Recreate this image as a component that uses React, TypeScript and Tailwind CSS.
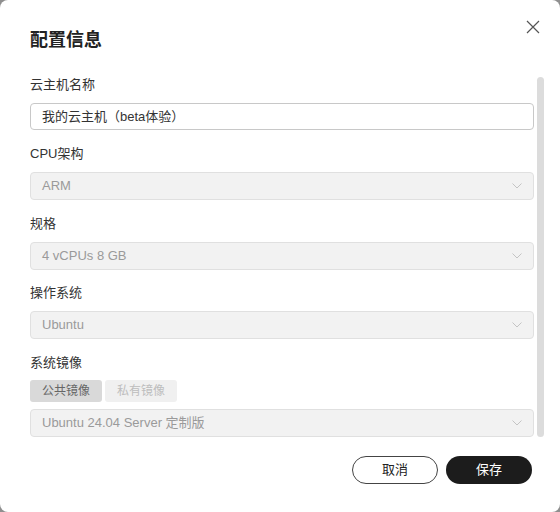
import React from "react";

const font = { fontFamily: '"Liberation Sans", "Noto Sans CJK SC", sans-serif' };

function Chevron() {
  return (
    <svg width="10" height="6" viewBox="0 0 10 6" fill="none" className="shrink-0">
      <path d="M0.5 0.5 L5 5 L9.5 0.5" stroke="#c4c4c4" strokeWidth="1" />
    </svg>
  );
}

function Label({ children }: { children: React.ReactNode }) {
  return <div className="h-[20px] text-[13px] leading-[20px] text-[#333]">{children}</div>;
}

function Select({ value }: { value: string }) {
  return (
    <div className="flex h-[28px] items-center justify-between rounded-[4px] border border-[#e0e0e0] bg-[#f2f2f2] pl-[11px] pr-[11px]">
      <span className="text-[13px] text-[#9a9a9a]">{value}</span>
      <Chevron />
    </div>
  );
}

export default function App() {
  return (
    <div className="h-[512px] w-[560px] bg-[#8f8f8f]" style={font}>
      <div className="flex h-full w-full flex-col rounded-[8px] bg-white">
        <div className="flex items-start justify-between pl-[30px] pr-[20px] pt-[30px]">
          <div className="text-[18px] font-bold leading-[20px] text-[#222]">配置信息</div>
          <svg width="14" height="14" viewBox="0 0 14 14" className="mt-[-10px]">
            <path d="M1 1 L13 13 M13 1 L1 13" stroke="#555" strokeWidth="1.2" />
          </svg>
        </div>
        <div className="mt-[25px] flex h-[362px] pl-[30px] pr-[16px]">
          <div className="flex w-[504px] flex-col overflow-hidden">
            <Label>云主机名称</Label>
            <div className="mt-[8px] flex h-[28px] items-center rounded-[4px] border border-[#c8c8c8] bg-white pl-[11px]">
              <span className="text-[13px] text-[#333]">我的云主机（beta体验）</span>
            </div>
            <div className="mt-[14px]"><Label>CPU架构</Label></div>
            <div className="mt-[8px]"><Select value="ARM" /></div>
            <div className="mt-[14px]"><Label>规格</Label></div>
            <div className="mt-[8px]"><Select value="4 vCPUs 8 GB" /></div>
            <div className="mt-[13px]"><Label>操作系统</Label></div>
            <div className="mt-[8px]"><Select value="Ubuntu" /></div>
            <div className="mt-[14px]"><Label>系统镜像</Label></div>
            <div className="mt-[7px] flex gap-[3px]">
              <div className="flex h-[22px] w-[72px] items-center justify-center rounded-[3px] bg-[#d9d9d9] text-[12px] text-[#666]">公共镜像</div>
              <div className="flex h-[22px] w-[72px] items-center justify-center rounded-[3px] bg-[#f0f0f0] text-[12px] text-[#bdbdbd]">私有镜像</div>
            </div>
            <div className="mt-[7px]"><Select value="Ubuntu 24.04 Server 定制版" /></div>
          </div>
          <div className="ml-[3px] mt-[2px] h-[360px] w-[7px] rounded-full bg-[#dcdcdc]" />
        </div>
        <div className="mt-[19px] flex justify-end gap-[8px] pr-[28px]">
          <button className="h-[28px] w-[86px] rounded-full border border-[#444] bg-white text-[13px] text-[#222]">取消</button>
          <button className="h-[28px] w-[86px] rounded-full bg-[#1c1c1c] text-[13px] text-white">保存</button>
        </div>
      </div>
    </div>
  );
}
